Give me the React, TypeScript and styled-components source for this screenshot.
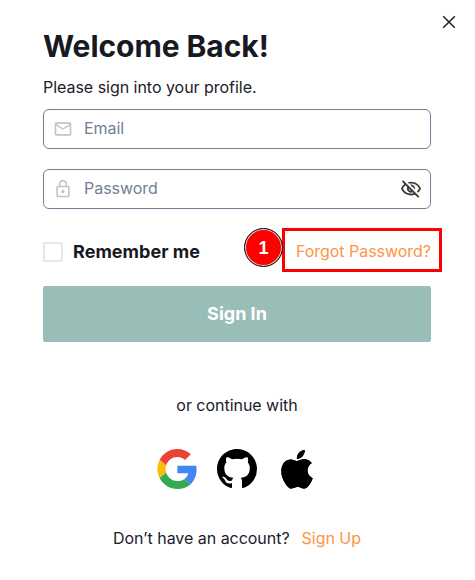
import React from "react";
import styled, { createGlobalStyle } from "styled-components";
import { MdOutlineEmail, MdLockOutline, MdOutlineVisibilityOff } from "react-icons/md";
import { BsApple, BsGithub } from "react-icons/bs";

const GlobalStyle = createGlobalStyle`
  *, *::before, *::after { box-sizing: border-box; }
  body {
    margin: 0;
    background: #fff;
    color: #1a202c;
    font: 400 16px/24px Inter, sans-serif;
    letter-spacing: -0.03px;
  }
`;

const Dialog = styled.main`
  display: flex;
  flex-direction: column;
  width: 475px;
  height: 580px;
  padding: 0 44px 0 43px;
  background: #fff;
`;

const Header = styled.header`
  display: flex;
  justify-content: space-between;
  height: 75px;
  margin-right: -25px;
`;

const Title = styled.h1`
  margin: 28px 0 0;
  font-size: 30px;
  line-height: 36px;
  font-weight: 700;
  letter-spacing: -0.06px;
  color: #171923;
  white-space: nowrap;
`;

const CloseButton = styled.button`
  display: flex;
  width: 14px;
  height: 14px;
  margin-top: 15px;
  padding: 0;
  border: 0;
  background: none;
  color: #1a202c;
`;

const Subtitle = styled.p`
  margin: 0 0 10px;
`;

const Field = styled.label`
  display: flex;
  align-items: center;
  height: 40px;
  margin-bottom: 20px;
  padding: 0 8px 0 9px;
  border: 1px solid #718096;
  border-radius: 6px;
  color: #c4c4c4;
`;

const Input = styled.input`
  flex: 1;
  min-width: 0;
  height: 26px;
  margin-left: 11px;
  padding: 0 0 2px;
  border: 0;
  outline: 0;
  background: none;
  font: inherit;
  letter-spacing: inherit;
  color: #1a202c;
  &::placeholder { color: #718096; opacity: 1; }
`;

const RevealIcon = styled(MdOutlineVisibilityOff)`
  color: #3c3c3c;
`;

const Options = styled.div`
  display: flex;
  align-items: center;
  justify-content: space-between;
  height: 46px;
`;

const Remember = styled.label`
  display: flex;
  align-items: center;
  gap: 10px;
  font-size: 18px;
  font-weight: 700;
  letter-spacing: 0.03px;
  color: #171923;
`;

const Checkbox = styled.span`
  width: 20px;
  height: 20px;
  border: 2px solid #e2e8f0;
  border-radius: 2px;
`;

const Link = styled.a`
  color: #fd9546;
  white-space: nowrap;
`;

const MarkedLink = styled(Link)`
  position: relative;
  margin-bottom: 2px;
`;

const Highlight = styled.span`
  position: absolute;
  top: -11px;
  right: -10.5px;
  width: 160px;
  height: 44px;
  border: 3px solid #fe0000;
`;

const StepBadge = styled.span`
  position: absolute;
  top: -11px;
  left: -52px;
  z-index: 1;
  display: flex;
  align-items: center;
  justify-content: center;
  width: 39px;
  height: 39px;
  border: 1px solid #111;
  border-radius: 50%;
  background: #fe0000;
  box-shadow: inset 0 0 0 1px #ddd;
  color: #fff;
  font: 700 18px/20px "Liberation Sans", sans-serif;
`;

const SubmitButton = styled.button`
  height: 56px;
  margin-top: 11px;
  border: 0;
  border-radius: 2px;
  background: #99beb7;
  color: #fff;
  font: 700 18px/24px Inter, sans-serif;
`;

const Divider = styled.p`
  margin: 51px 0 32px;
  text-align: center;
`;

const Providers = styled.div`
  display: flex;
  justify-content: center;
  gap: 20px;
  color: #000;
`;

const Footer = styled.footer`
  display: flex;
  justify-content: center;
  gap: 12px;
  margin-top: 37px;
  white-space: nowrap;
`;

function GoogleLogo() {
  return (
    <svg width="40" height="40" viewBox="-0.5 0 48 48" aria-label="Google">
      <path fill="#EA4335" d="M24 9.5c3.54 0 6.71 1.22 9.21 3.6l6.85-6.85C35.9 2.38 30.47 0 24 0 14.62 0 6.51 5.38 2.56 13.22l7.98 6.19C12.43 13.72 17.74 9.5 24 9.5z" />
      <path fill="#4285F4" d="M46.98 24.55c0-1.57-.15-3.09-.38-4.55H24v9.02h12.94c-.58 2.96-2.26 5.48-4.78 7.18l7.73 6c4.51-4.18 7.09-10.36 7.09-17.65z" />
      <path fill="#FBBC05" d="M10.53 28.59c-.48-1.45-.76-2.99-.76-4.59s.27-3.14.76-4.59l-7.98-6.19C.92 16.46 0 20.12 0 24c0 3.88.92 7.54 2.56 10.78l7.97-6.19z" />
      <path fill="#34A853" d="M24 48c6.48 0 11.93-2.13 15.89-5.81l-7.73-6c-2.15 1.45-4.92 2.3-8.16 2.3-6.26 0-11.57-4.22-13.47-9.91l-7.98 6.19C6.51 42.62 14.62 48 24 48z" />
    </svg>
  );
}

const AppleLogo = styled(BsApple)`
  width: 40px;
  height: 40px;
  padding: 1px 0.5px 0.5px;
`;

export default function App() {
  return (
    <>
      <GlobalStyle />
      <Dialog>
        <Header>
          <Title>Welcome Back!</Title>
          <CloseButton aria-label="Close">
            <svg width="14" height="14" viewBox="0 0 14 14" fill="none" stroke="currentColor" strokeWidth="1.5">
              <path d="M1.2 1.2 12.8 12.8M12.8 1.2 1.2 12.8" />
            </svg>
          </CloseButton>
        </Header>
        <Subtitle>Please sign into your profile.</Subtitle>
        <Field>
          <MdOutlineEmail size={20} />
          <Input type="email" placeholder="Email" />
        </Field>
        <Field>
          <MdLockOutline size={20} />
          <Input type="password" placeholder="Password" />
          <RevealIcon size={22} />
        </Field>
        <Options>
          <Remember>
            <Checkbox />
            Remember me
          </Remember>
          <MarkedLink>
            <Highlight />
            <StepBadge>1</StepBadge>
            Forgot Password?
          </MarkedLink>
        </Options>
        <SubmitButton>Sign In</SubmitButton>
        <Divider>or continue with</Divider>
        <Providers>
          <GoogleLogo />
          <BsGithub size={40} />
          <AppleLogo />
        </Providers>
        <Footer>
          <span>Don’t have an account?</span>
          <Link>Sign Up</Link>
        </Footer>
      </Dialog>
    </>
  );
}
